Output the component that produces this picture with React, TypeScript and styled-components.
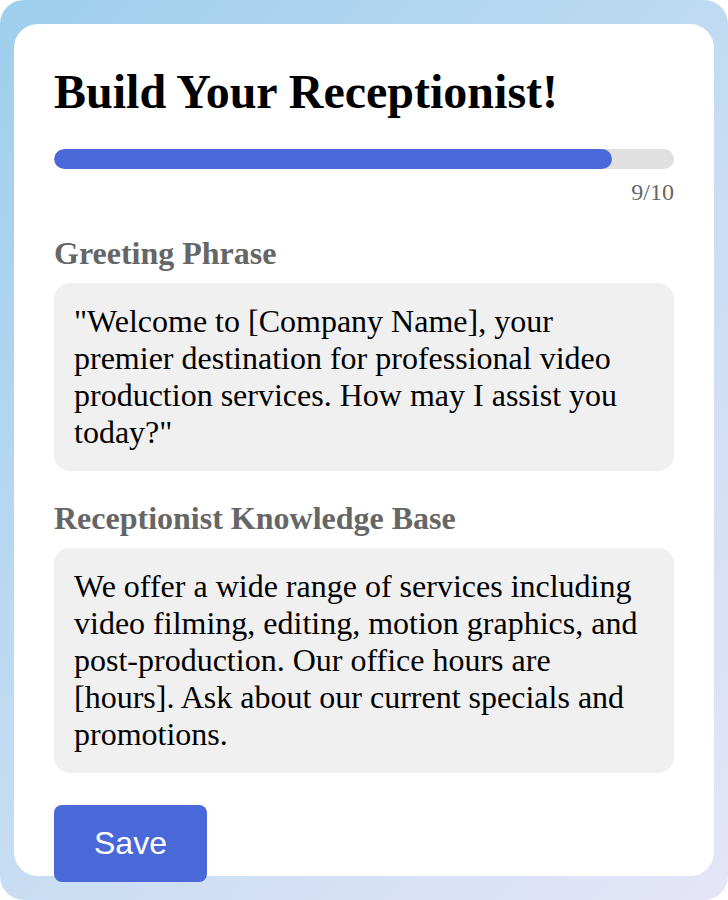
import React from "react";
import styled, { createGlobalStyle } from "styled-components";

const Global = createGlobalStyle`
  html, body { margin: 0; padding: 0; }
  body { font-family: "Liberation Serif", "Times New Roman", serif; background: #fff; }
`;

const Frame = styled.div`
  width: 728px;
  height: 900px;
  box-sizing: border-box;
  padding: 24px 14px;
  border-radius: 24px;
  background: linear-gradient(135deg, #9dcfec 0%, #c4dcf2 50%, #e6e5f8 100%);
`;

const Card = styled.div`
  height: 100%;
  box-sizing: border-box;
  background: #ffffff;
  border-radius: 24px;
  padding: 40px;
`;

const Title = styled.h1`
  margin: 0 0 30px;
  font-size: 48px;
  font-weight: 700;
  color: #000;
`;

const Track = styled.div`
  height: 20px;
  border-radius: 10px;
  background: #e0e0e0;
  overflow: hidden;
`;

const Fill = styled.div`
  height: 100%;
  border-radius: 10px;
  background: #4a69d9;
`;

const Count = styled.div`
  margin-top: 10px;
  text-align: right;
  font-size: 24px;
  color: #666;
`;

const Section = styled.div<{ $top: number }>`
  margin-top: ${(p) => p.$top}px;
`;

const Label = styled.h2`
  margin: 0 0 11px;
  font-size: 32px;
  font-weight: 700;
  color: #666;
`;

const Box = styled.div`
  background: #f0f0f0;
  border-radius: 16px;
  padding: 20px;
  font-size: 32px;
  color: #000;
`;

const SaveButton = styled.button`
  display: block;
  margin-top: 32px;
  padding: 20px 40px;
  border: none;
  border-radius: 8px;
  background: #4a69d9;
  color: #fff;
  font-family: "Liberation Sans", Arial, sans-serif;
  font-size: 32px;
  cursor: pointer;
`;

export default function App() {
  const progress = 9 / 10;
  return (
    <>
      <Global />
      <Frame>
        <Card>
          <Title>Build Your Receptionist!</Title>
          <Track>
            <Fill style={{ width: `${progress * 100}%` }} />
          </Track>
          <Count>9/10</Count>
          <Section $top={29}>
            <Label>Greeting Phrase</Label>
            <Box>
              "Welcome to [Company Name], your premier destination for professional video production services. How may I assist you today?"
            </Box>
          </Section>
          <Section $top={29}>
            <Label>Receptionist Knowledge Base</Label>
            <Box>
              We offer a wide range of services including video filming, editing, motion graphics, and post-production. Our office hours are [hours]. Ask about our current specials and promotions.
            </Box>
          </Section>
          <SaveButton>Save</SaveButton>
        </Card>
      </Frame>
    </>
  );
}
